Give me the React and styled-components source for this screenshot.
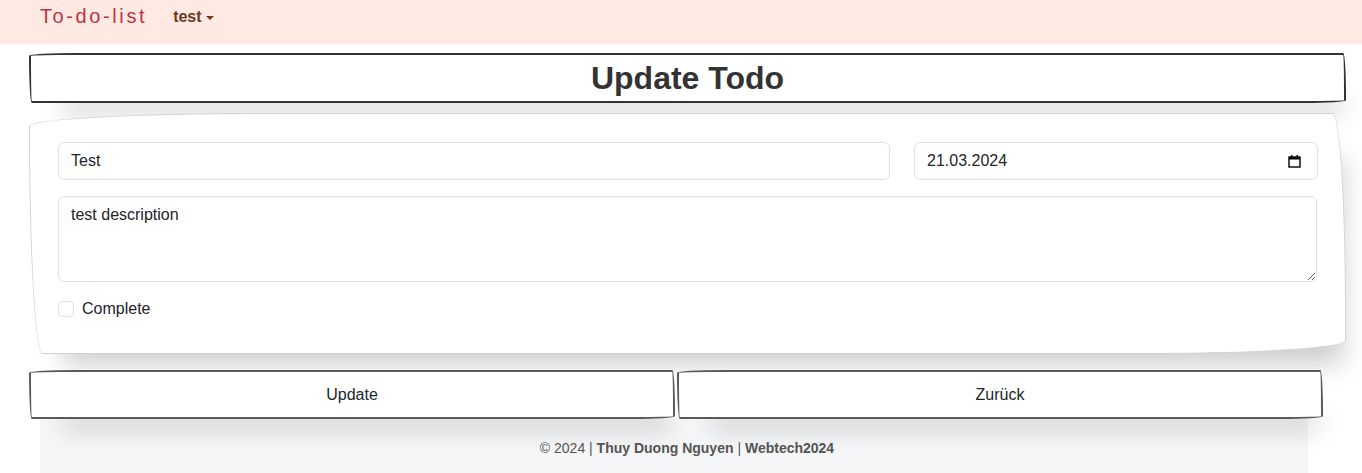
import { useState } from "react"
import styled, { createGlobalStyle } from "styled-components"

const Global = createGlobalStyle`
body{
  margin: 0;
  background: #fff;
  font-family: "Liberation Sans", Arial, sans-serif;
  color: #212529;
}
*{ box-sizing: border-box; }
`

const wobbly = "255px 15px 225px 15px / 15px 225px 15px 255px"

const Nav = styled.nav`
height: 44px;
background: #ffe9e3;
display: flex;
align-items: center;
padding: 0 0 11px 40px;
`

const Brand = styled.a`
font-size: 20px;
letter-spacing: 2.6px;
color: #c0343f;
text-decoration: none;
margin-right: 26px;
`

const User = styled.span`
font-weight: bold;
font-size: 16px;
color: #6b3a1f;
display: flex;
align-items: center;
gap: 4px;
margin-top: 1px;
&::after{
  content: "";
  border-top: 4px solid #6b3a1f;
  border-left: 4px solid transparent;
  border-right: 4px solid transparent;
  margin-top: 1px;
}
`

const Main = styled.main`
padding: 9px 16px 0 29px;
display: flex;
flex-direction: column;
`

const TitleBox = styled.div`
height: 50px;
border: 2px solid #333;
border-radius: ${wobbly};
display: flex;
align-items: center;
justify-content: center;
box-shadow: 15px 28px 25px -18px rgba(0,0,0,.2);
background: #fff;
h1{
  margin: 0;
  font-size: 32px;
  color: #333;
}
`

const Card = styled.form`
margin-top: 10px;
min-height: 240px;
border: 1px solid #d2d2d2;
border-radius: ${wobbly};
box-shadow: 15px 28px 25px -18px rgba(0,0,0,.2);
background: #fff;
padding: 28px 28px 32px 28px;
display: flex;
flex-direction: column;
`

const Row = styled.div`
display: grid;
grid-template-columns: 832px 404px;
gap: 24px;
`

const fieldBase = `
height: 38px;
border: 1px solid #dee2e6;
border-radius: 6px;
background: #fff;
font-family: "Liberation Sans", Arial, sans-serif;
font-size: 16px;
color: #212529;
`

const Input = styled.input`
${fieldBase}
padding: 6px 12px;
width: 100%;
outline: none;
`

const DateField = styled.label`
${fieldBase}
display: flex;
align-items: center;
justify-content: space-between;
padding: 0 16px 0 12px;
input{
  border: none;
  outline: none;
  font: inherit;
  color: inherit;
  padding: 0;
  width: 120px;
}
`

const TextArea = styled.textarea`
${fieldBase}
height: 86px;
margin-top: 16px;
padding: 6px 12px;
width: 100%;
outline: none;
resize: vertical;
line-height: 24px;
`

const Check = styled.label`
display: flex;
align-items: center;
gap: 8px;
margin-top: 15px;
font-size: 16px;
line-height: 24px;
input{
  appearance: none;
  width: 16px;
  height: 16px;
  margin: 0;
  border: 1px solid #dee2e6;
  border-radius: 4px;
  background: #fff;
}
`

const Buttons = styled.div`
display: flex;
gap: 2px;
margin-top: 16px;
margin-right: 23px;
`

const Button = styled.button`
flex: 1;
height: 49px;
position: relative;
z-index: 1;
background: #fff;
border: 2px solid #5a5a5a;
border-radius: ${wobbly};
box-shadow: 15px 28px 25px -18px rgba(0,0,0,.2);
font-family: "Liberation Sans", Arial, sans-serif;
font-size: 16px;
color: #212529;
cursor: pointer;
`

const Footer = styled.footer`
margin: 0 38px 0 11px;
background: #f5f6f8;
height: 60px;
padding: 21px 0 0 26px;
text-align: center;
font-size: 14px;
color: #555;
b{ font-weight: bold; }
`

const CalendarIcon = () => (
  <svg width="13" height="14" viewBox="0 0 13 14">
    <rect x="1" y="3" width="11" height="10" fill="none" stroke="#000" strokeWidth="1.4" />
    <rect x="1" y="3" width="11" height="2.5" fill="#000" />
    <rect x="3" y="1" width="1.5" height="2.5" fill="#000" />
    <rect x="8.5" y="1" width="1.5" height="2.5" fill="#000" />
  </svg>
)

export default function App() {
  const [todo, setTodo] = useState({
    title: "Test",
    date: "21.03.2024",
    description: "test description",
    complete: false
  })
  const set = (k) => (e) =>
    setTodo({ ...todo, [k]: e.target.type === "checkbox" ? e.target.checked : e.target.value })

  return (
    <>
      <Global />
      <Nav>
        <Brand href="#">To-do-list</Brand>
        <User>test</User>
      </Nav>
      <Main>
        <TitleBox><h1>Update Todo</h1></TitleBox>
        <Card onSubmit={(e) => e.preventDefault()}>
          <Row>
            <Input value={todo.title} onChange={set("title")} />
            <DateField>
              <input value={todo.date} onChange={set("date")} />
              <CalendarIcon />
            </DateField>
          </Row>
          <TextArea value={todo.description} onChange={set("description")} />
          <Check>
            <input type="checkbox" checked={todo.complete} onChange={set("complete")} />
            Complete
          </Check>
        </Card>
        <Buttons>
          <Button>Update</Button>
          <Button>Zurück</Button>
        </Buttons>
        <Footer>
          © 2024 | <b>Thuy Duong Nguyen</b> | <b>Webtech2024</b>
        </Footer>
      </Main>
    </>
  )
}
